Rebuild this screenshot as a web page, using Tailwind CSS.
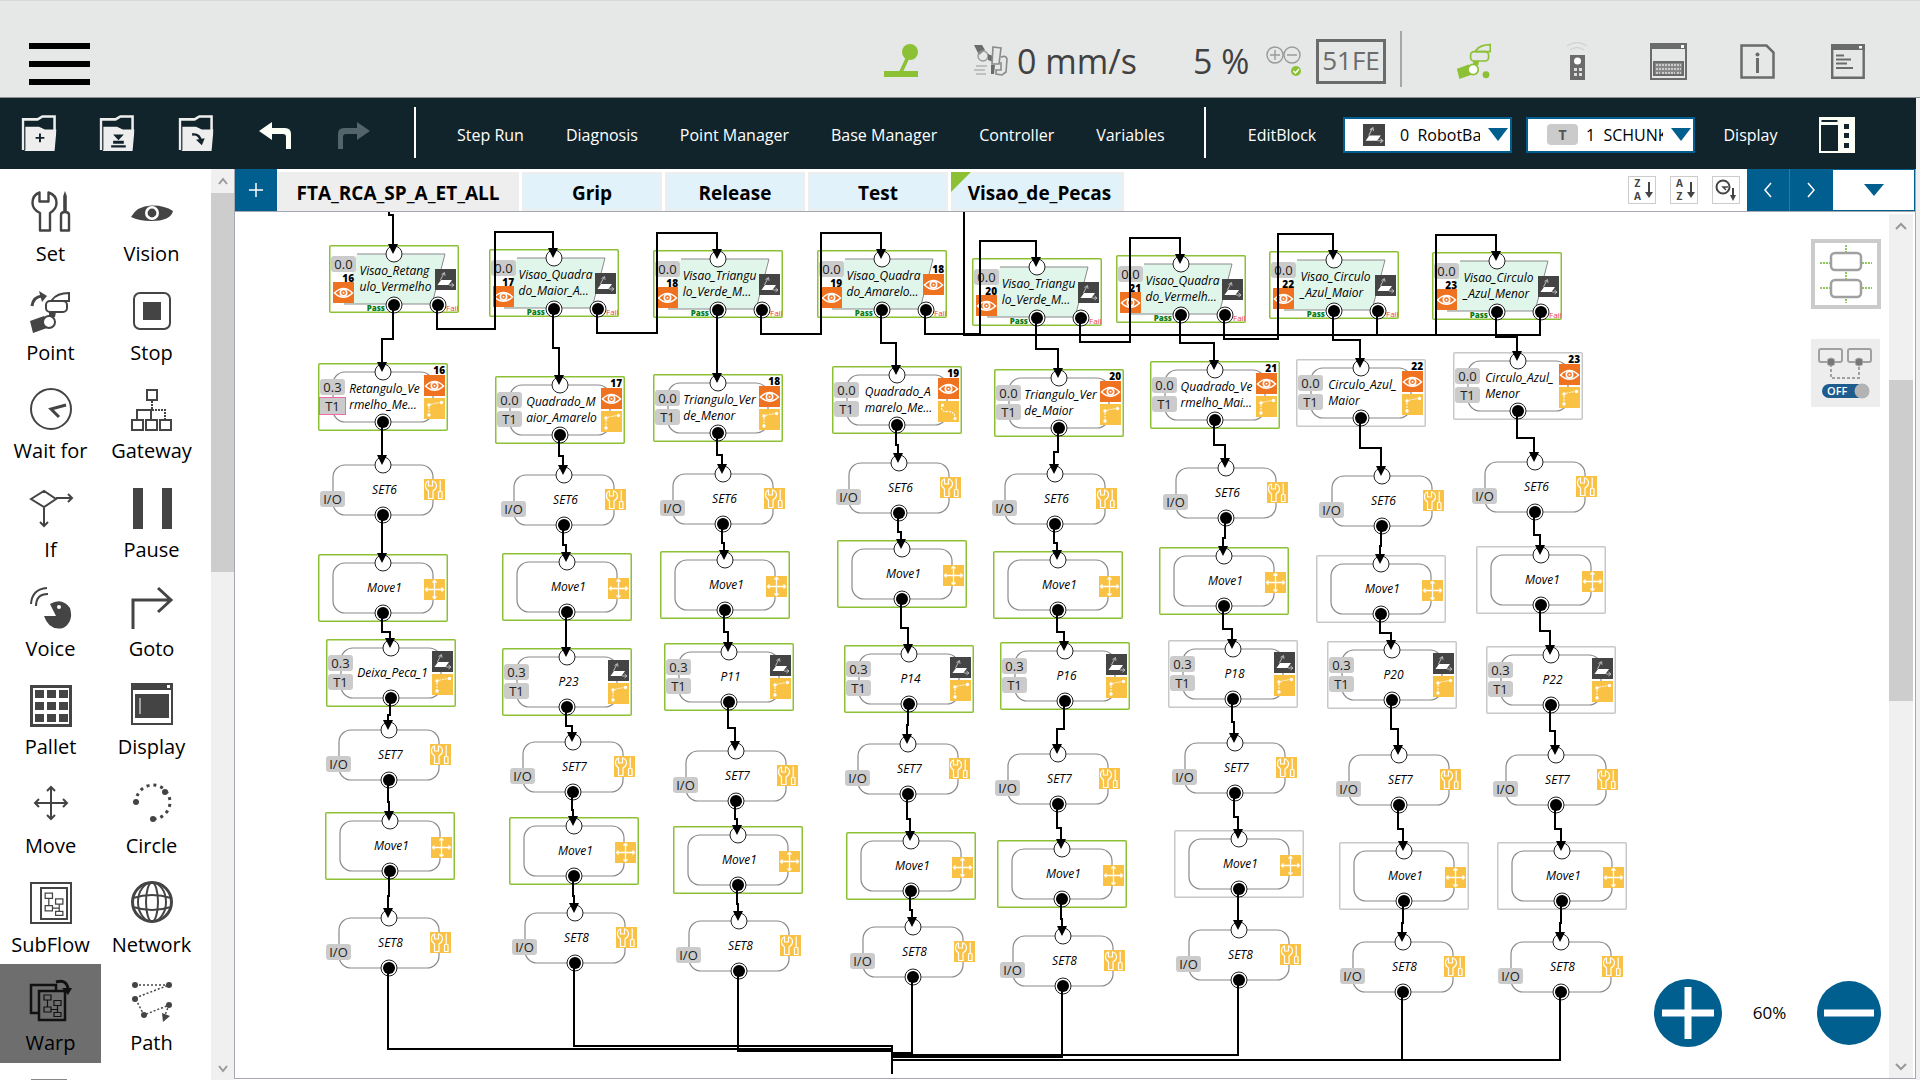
<!DOCTYPE html>
<html lang="en">
<head>
<meta charset="utf-8">
<title>Flow Editor</title>
<script src="https://cdn.jsdelivr.net/npm/@tailwindcss/browser@4"></script>
</head>
<body class="h-screen flex flex-col overflow-hidden bg-[#f0f0f0] font-['Open_Sans','Noto_Sans',sans-serif] text-black">

<!-- Shared icon symbols -->
<svg class="hidden" aria-hidden="true">
  <symbol id="tools" viewBox="0 0 40 42"><g fill="none" stroke="currentColor" stroke-width="2.4" stroke-linejoin="round"><path d="M8.5 2.5v9h9v-9q8 2.500 8 10.500q0 6-6.500 10v17.500h-10v-17.500q-7.500-3.500-7.500-10q0-8 7-10.500z"/><path d="M30 25q0-3 4-3t4 3v15.500h-8z"/></g><path d="M34 1l1.800 5v16h-3.600v-16z" fill="currentColor"/></symbol>
  <symbol id="eye-solid" viewBox="0 0 42 16"><path d="M0 12Q6 1 20 .500Q33 0 42 6Q40 16 20 16Q8 16 0 12z" fill="#444"/><circle cx="21" cy="8" r="5.700" fill="#444" stroke="#fff" stroke-width="2.600"/></symbol>
  <symbol id="arm" viewBox="0 0 40 42"><g fill="none" stroke="currentColor" stroke-width="2"><path d="M22 9q5-7 17-7v8h-17z"/><rect x="16" y="10" width="21" height="11" rx="4"/></g><path d="M19 21h7l-1 5h-6zM0 30l14-5l6 9l-3 3l-14 5z" fill="currentColor"/><circle cx="19" cy="31" r="6" fill="#fff" stroke="currentColor" stroke-width="2"/></symbol>
  <symbol id="flow" viewBox="0 0 20 24"><path d="M2 2h7v5h-7zM2 14h7v5h-7zM12 7.500h7v5h-7zM12 19.500h7v4h-7zM5.500 7v7M9 16.500h6.500M15.500 12.500v7" fill="none" stroke="currentColor" stroke-width="1.200"/></symbol>
  <symbol id="n-eye" viewBox="0 0 21 21"><rect width="21" height="21" fill="#ee7220"/><path d="M1.500 11Q10.500 2 19.500 11Q10.500 19.500 1.500 11z" fill="none" stroke="#fff" stroke-width="1.600"/><circle cx="10.500" cy="10.700" r="3.200" fill="none" stroke="#fff" stroke-width="1.600"/><circle cx="10.500" cy="10.700" r="1" fill="#fff"/></symbol>
  <symbol id="n-base" viewBox="0 0 21 21"><rect width="21" height="21" fill="#444"/><path d="M6 11h11l-3.500 5h-11z" fill="#fff"/><path d="M5.500 11L9 4M6.500 5.500L9.500 3.500l.5 3.300M14 16h5M16.500 14l2.500 2l-2.500 2" fill="none" stroke="#bbb" stroke-width="1"/></symbol>
  <symbol id="n-path" viewBox="0 0 21 21"><rect width="21" height="21" fill="#f9c245"/><path d="M5 17V7Q9 5.500 17 4.500" fill="none" stroke="#fff" stroke-width="1" stroke-dasharray="2 1"/><circle cx="5" cy="7" r="1.700" fill="#fff"/><circle cx="5" cy="17" r="1.700" fill="#fff"/><circle cx="17.500" cy="4.500" r="1.700" fill="#fff"/></symbol>
  <symbol id="n-curve" viewBox="0 0 21 21"><rect width="21" height="21" fill="#f9c245"/><path d="M4 4Q2 11 9 10.500Q17 10 17 17" fill="none" stroke="#fff" stroke-width="1.200" stroke-dasharray="2 1"/><circle cx="4.500" cy="4" r="1.600" fill="#fff"/><circle cx="17" cy="17.500" r="1.600" fill="#fff"/></symbol>
  <symbol id="n-set" viewBox="0 0 21 21"><rect width="21" height="21" fill="#f9c245"/><g fill="none" stroke="#fff" stroke-width="1.200"><path d="M4.500 2v5h4v-5q4 1 4 5q0 3-3.500 5v7.500h-4.500v-7.500q-3-2-3-5q0-4 3-5z"/><path d="M14.500 13q1.700-1.500 3.500 0v6.500h-3.500zM16.200 12V1.500"/></g></symbol>
  <symbol id="n-move" viewBox="0 0 21 21"><rect width="21" height="21" fill="#f9c245"/><path d="M10.500 2v17M2 10.500h17M8.500 3.500l2-2l2 2M8.500 17.500l2 2l2-2M3.500 8.500l-2 2l2 2M17.500 8.500l2 2l-2 2" fill="none" stroke="#fff" stroke-width="1.300"/></symbol>
  <symbol id="folder" viewBox="0 0 36 37"><path d="M1.500 36V4.500h15l5-3h12.500V18" fill="none" stroke="#eee" stroke-width="2.600"/><path d="M4 36V12h14l6 3h12l-2 22H3z" fill="#eee"/></symbol>
</svg>

<header class="h-[98px] shrink-0 bg-[#e6e7e7] border-t border-t-[#d9dada] border-b border-b-[#8c9293] flex items-center pt-1 pl-[29px] pr-[55px]">
  <button aria-label="Menu" class="w-[61px] mt-[26px] flex flex-col gap-3">
    <span class="block h-[6px] w-full bg-black"></span><span class="block h-[6px] w-full bg-black"></span><span class="block h-[6px] w-full bg-black"></span>
  </button>
  <div class="ml-auto flex items-center pt-5 text-[#414141]">
    <svg class="w-[34px] h-[34px]" viewBox="0 0 34 34" fill="#8dc135"><circle cx="26" cy="8" r="8"/><path d="M22 13l3 2l-6 13h-4zM0 27h34v6H0z"/></svg>
    <svg class="w-[35px] h-[32px] ml-[56px]" viewBox="0 0 35 32"><path d="M0 0h8l3 5l-6 5z" fill="#6b6b6b"/><circle cx="9" cy="11" r="5" fill="none" stroke="#999" stroke-width="1.400"/><path d="M14 9l5 2v6l-5-2z" fill="#6b6b6b"/><path d="M19 2l8 1l-2 16h-7zM27 12q5-2 6 2l-1 13l-4 3l-6-1v-4h5v-8" fill="none" stroke="#8a8a8a" stroke-width="1.600"/><path d="M2 21h11M0 25h11M2 29h10" stroke="#999" stroke-width="1.200"/><path d="M17 20h4l-1 9h-3z" fill="#6b6b6b"/></svg>
    <span class="ml-2 w-[176px] text-[34px] leading-9">0 mm/s</span>
    <span class="w-[73px] text-[34px] leading-9">5 %</span>
    <svg class="w-[35px] h-[30px]" viewBox="0 0 35 30" fill="none" stroke="#9a9a9a" stroke-width="1.400"><circle cx="9" cy="9" r="8"/><circle cx="26" cy="9" r="8"/><path d="M4 9h10M9 4v10M21 9h10"/><circle cx="30" cy="25" r="5" fill="#8dc135" stroke="none"/><path d="M27.500 25l2 2l3.500-4" stroke="#fff"/></svg>
    <span class="ml-[15px] w-[70px] h-[45px] border-[3px] border-[#6b6b6b] text-[#6b6b6b] text-[26px] leading-[36px] text-center">51FE</span>
    <span class="ml-[14px] w-[2px] h-14 -mt-1 bg-[#a5a7a7]"></span>
    <svg class="ml-[54px] w-9 h-9 text-[#8dc135]" viewBox="0 0 40 42"><use href="#arm"/><circle cx="34" cy="37" r="4" fill="currentColor"/></svg>
    <svg class="ml-[74px] w-[22px] h-[38px]" viewBox="0 0 22 38"><path d="M1 4q10-7 20 0M4 8q7-5 14 0" fill="none" stroke="#d3d5d5" stroke-width="1.500"/><path d="M4 13h15v25H4z" fill="#6b6b6b"/><circle cx="11.500" cy="19" r="3.500" fill="#fff"/><path d="M8 26h3v3H8zm5 0h3v3h-3zM8 31h3v3H8zm5 0h3v3h-3z" fill="#ddd"/></svg>
    <svg class="ml-[62px] w-[37px] h-[37px]" viewBox="0 0 37 37"><path d="M1 1h35v35H1z" fill="none" stroke="#6b6b6b" stroke-width="2"/><path d="M0 0h37v6H0z" fill="#6b6b6b"/><path d="M4 19h29v13H4z" fill="#888" stroke="#6b6b6b" stroke-width="2"/><path d="M31 2h3v3h-3z" fill="#fff"/><path d="M6 22h25M6 26h25M6 30h4M12 30h13M27 30h4" stroke="#ccc" stroke-width="2" stroke-dasharray="2 1"/></svg>
    <svg class="ml-[53px] w-[35px] h-[35px]" viewBox="0 0 35 35"><path d="M1.500 1.500h25l7 7v25h-32z" fill="none" stroke="#6b6b6b" stroke-width="2.500"/><circle cx="17.500" cy="10.500" r="2" fill="#6b6b6b"/><path d="M17.500 14v15" stroke="#6b6b6b" stroke-width="3"/></svg>
    <svg class="ml-14 w-[34px] h-[35px]" viewBox="0 0 34 35"><path d="M1.200 1h31.500v32.800H1.200z" fill="none" stroke="#6b6b6b" stroke-width="2.400"/><path d="M0 0h34v6H0z" fill="#6b6b6b"/><path d="M28 2h3v2.500h-3z" fill="#fff"/><path d="M5 11.500h8M5 15.500h15M5 19.500h11M5 24h17" stroke="#6b6b6b" stroke-width="2"/></svg>
  </div>
</header>

<nav class="h-[71px] shrink-0 mr-[4px] bg-[#12242b] text-white text-base flex items-center pl-[21px] pt-[2px] whitespace-nowrap">
  <button aria-label="New" class="w-9 h-9 -mt-1"><svg class="w-9 h-9" viewBox="0 0 36 37"><use href="#folder"/><path d="M19 19v9M14.500 23.500h9" stroke="#12242b" stroke-width="2"/></svg></button>
  <button aria-label="Save" class="ml-[42px] w-9 h-9 -mt-1"><svg class="w-9 h-9" viewBox="0 0 36 37"><use href="#folder"/><path d="M14 20h11l-5.500 6zM14 26.500h11v3H14zM12 31h15v2.500H12z" fill="#12242b"/></svg></button>
  <button aria-label="Open" class="ml-[43px] w-9 h-9 -mt-1"><svg class="w-9 h-9" viewBox="0 0 36 37"><use href="#folder"/><path d="M14 20q8-1 9 7" fill="none" stroke="#12242b" stroke-width="2.500"/><path d="M18 25.500l9-1.500l-3 7z" fill="#12242b"/></svg></button>
  <button aria-label="Undo" class="ml-[45px] w-8 h-8"><svg class="text-[#fcfff5]" viewBox="0 0 32 32"><path d="M0 12L13 3v6h13q6 0 6 6v15h-5V18q0-3-3-3H13v6z" fill="currentColor"/></svg></button>
  <button aria-label="Redo" class="ml-[47px] w-8 h-8"><svg class="text-[#54646b]" viewBox="0 0 32 32"><path d="M32 12L19 3v6H6q-6 0-6 6v15h5V18q0-3 3-3h11v6z" fill="currentColor"/></svg></button>
  <span class="ml-11 w-[2px] h-[51px] bg-white -mt-1"></span>
  <div class="ml-[41px] w-[747px] flex gap-[42px]">
    <button>Step Run</button><button>Diagnosis</button><button>Point Manager</button><button>Base Manager</button><button>Controller</button><button>Variables</button>
  </div>
  <span class="w-[2px] h-[51px] bg-white -mt-1"></span>
  <button class="ml-[41px] w-[70px]">EditBlock</button>
  <div class="relative ml-[26px]">
    <select aria-label="Base" class="appearance-none block w-[169px] h-9 bg-white border-2 border-[#005f8f] pl-[55px] pr-[30px] text-black text-base overflow-hidden"><option>0&nbsp; RobotBase</option></select>
    <svg class="absolute left-[20px] top-[7px] w-[22px] h-[22px]"><use href="#n-base"/></svg>
    <svg class="absolute right-1 top-[11px] w-5 h-[13px]" viewBox="0 0 20 13"><path d="M0 0h20L10 13z" fill="#005f8f"/></svg>
  </div>
  <div class="relative ml-[14px]">
    <select aria-label="Tool" class="appearance-none block w-[169px] h-9 bg-white border-2 border-[#005f8f] pl-[58px] pr-[30px] text-black text-base overflow-hidden"><option>1&nbsp; SCHUNK</option></select>
    <span class="absolute left-[21px] top-[7px] w-[31px] h-[21px] rounded bg-[#cbcbcb] text-[#555] text-sm leading-[21px] font-bold text-center">T</span>
    <svg class="absolute right-1 top-[11px] w-5 h-[13px]" viewBox="0 0 20 13"><path d="M0 0h20L10 13z" fill="#005f8f"/></svg>
  </div>
  <button class="ml-7 w-[55px]">Display</button>
  <button aria-label="Panel layout" class="ml-[41px]"><svg class="w-9 h-9" viewBox="0 0 36 36"><path d="M0 0h36v36H0z" fill="#fcfff5"/><path d="M2.500 4h16M3 9h15v24H3z" fill="#12242b" stroke="#12242b" stroke-width="2"/><path d="M25 7h5v5h-5zm0 9h5v5h-5zm0 10h5v5h-5z" fill="#12242b"/></svg></button>
</nav>

<main class="flex-1 min-h-0 mr-[4px] flex bg-white">
  <aside class="w-[211px] shrink-0 flex flex-col pt-[6px] pr-[9px]">
    <div id="palette" class="flex-1 min-h-0 grid grid-cols-2 grid-rows-9"></div>
    <div class="h-[17px] shrink-0 flex items-end pl-[31px]"><span class="w-9 h-px bg-[#888]"></span></div>
  </aside>
  <div class="w-[23px] shrink-0 bg-[#f0f0f0] flex flex-col items-center text-[#999]">
    <svg class="h-6 w-3 shrink-0" viewBox="0 0 12 24"><path d="M2 15l4-5l4 5" fill="none" stroke="currentColor" stroke-width="2"/></svg>
    <div class="w-full h-[379px] bg-[#cdcdcd]"></div>
    <svg class="h-6 w-3 shrink-0 mt-auto" viewBox="0 0 12 24"><path d="M2 10l4 5l4-5" fill="none" stroke="currentColor" stroke-width="2"/></svg>
  </div>

  <section class="flex-1 min-w-0 flex flex-col border-l border-r border-b border-[#a5a8b0] mb-px">
    <div class="h-[43px] shrink-0 flex items-end border-b border-[#a5a8b0] whitespace-nowrap">
      <button class="w-[42px] h-[42px] bg-[#005f8f] flex items-center justify-center" aria-label="Add tab"><svg class="w-[14px] h-[14px]" viewBox="0 0 14 14"><path d="M7 0v14M0 7h14" stroke="#fff" stroke-width="1.500"/></svg></button>
      <div class="flex gap-[3px] text-[19px] font-bold">
        <button class="w-[242px] h-[39px] bg-[#eee] pt-1">FTA_RCA_SP_A_ET_ALL</button>
        <button class="w-[140px] h-[39px] bg-[#e1f2fb] border-2 border-[#eee] pt-1">Grip</button>
        <button class="w-[140px] h-[39px] bg-[#e1f2fb] border-2 border-[#eee] pt-1">Release</button>
        <button class="w-[140px] h-[39px] bg-[#e1f2fb] border-2 border-[#eee] pt-1">Test</button>
        <button class="relative w-[173px] h-[39px] bg-[#e1f2fb] border-2 border-[#eee] pt-1 pl-1">Visao_de_Pecas<svg class="absolute -left-[2px] -top-[2px] w-5 h-5" viewBox="0 0 20 20"><path d="M0 0h20L0 20z" fill="#8dc135"/></svg></button>
      </div>
      <div class="ml-auto self-center flex gap-[14px] pr-[7px]">
        <button aria-label="Sort descending" class="w-7 h-7 border border-[#ccc] bg-white flex items-center gap-[3px] pl-1 text-[#444] text-[10px] font-bold"><span class="flex flex-col w-[9px] leading-[13px]"><span>Z</span><span>A</span></span><svg class="w-2 h-4" viewBox="0 0 8 16"><path d="M4 0v12" stroke="#444" stroke-width="2"/><path d="M0 10h8l-4 6z" fill="#444"/></svg></button>
        <button aria-label="Sort ascending" class="w-7 h-7 border border-[#ccc] bg-white flex items-center gap-[3px] pl-1 text-[#444] text-[10px] font-bold"><span class="flex flex-col w-[9px] leading-[13px]"><span>A</span><span>Z</span></span><svg class="w-2 h-4" viewBox="0 0 8 16"><path d="M4 0v12" stroke="#444" stroke-width="2"/><path d="M0 10h8l-4 6z" fill="#444"/></svg></button>
        <button aria-label="Sort by time" class="w-7 h-7 border border-[#ccc] bg-white"><svg viewBox="0 0 26 26"><circle cx="10" cy="10" r="6.500" fill="none" stroke="#444" stroke-width="2"/><path d="M15 10h-5l3 3" fill="none" stroke="#444" stroke-width="1.500"/><path d="M20 11v8" stroke="#444" stroke-width="2"/><path d="M17 18h6l-3 6z" fill="#444"/></svg></button>
      </div>
      <div class="flex h-[42px]">
        <button aria-label="Previous tabs" class="w-[43px] bg-[#005f8f] border-r border-[#2a7ba5] flex items-center justify-center"><svg class="w-3 h-4" viewBox="0 0 12 16"><path d="M9 1L3 8l6 7" fill="none" stroke="#fff" stroke-width="1.500"/></svg></button>
        <button aria-label="Next tabs" class="w-[42px] bg-[#005f8f] flex items-center justify-center"><svg class="w-3 h-4" viewBox="0 0 12 16"><path d="M3 1l6 7l-6 7" fill="none" stroke="#fff" stroke-width="1.500"/></svg></button>
        <button aria-label="Tab list" class="w-[83px] bg-white border border-[#005f8f] flex items-center justify-center"><svg class="w-5 h-3" viewBox="0 0 20 12"><path d="M0 0h20L10 12z" fill="#005f8f"/></svg></button>
      </div>
    </div>

    <div class="flex-1 min-h-0 flex">
      <div id="canvas" class="relative flex-1 min-w-0 overflow-hidden">
        <div id="nodes"></div>
        <svg id="edges" class="absolute inset-0 w-full h-full pointer-events-none" fill="none" stroke="#000" stroke-width="2"></svg>

        <div class="absolute right-2 top-[27px] flex flex-col gap-[30px]">
          <button aria-label="Align nodes" class="w-[70px] h-[70px] border-4 border-[#cbcbcb] bg-white"><svg viewBox="0 0 62 62"><path d="M31 2v58M5 20h52M5 45h52" stroke="#8dc95a" stroke-width="2" stroke-dasharray="2 1"/><rect x="16" y="10" width="30" height="17" rx="4" fill="#fff" stroke="#a0a0a0" stroke-width="2.500"/><rect x="16" y="37" width="30" height="17" rx="4" fill="#fff" stroke="#a0a0a0" stroke-width="2.500"/></svg></button>
          <button class="relative w-[69px] h-[68px] bg-[#ededed]" aria-label="Link mode off">
            <svg class="w-full h-full" viewBox="0 0 69 68" fill="none"><g stroke="#a0a0a0" stroke-width="2"><rect x="8" y="10" width="23" height="13" rx="2"/><rect x="37" y="10" width="23" height="13" rx="2"/><path d="M20 25v14h28V25" stroke-dasharray="3 2"/></g><circle cx="20" cy="23" r="4" fill="#777" stroke="#aaa"/><circle cx="48" cy="23" r="4" fill="#777" stroke="#aaa"/><rect x="11" y="45" width="47" height="14" rx="7" fill="#1d5c8c"/><circle cx="51" cy="52" r="7.500" fill="#b3b3b3"/></svg>
            <span class="absolute left-4 top-[45px] text-[11px] leading-[14px] font-semibold text-white">OFF</span>
          </button>
        </div>

        <div class="absolute right-2 bottom-[31px] flex items-center text-[17px]">
          <button aria-label="Zoom in"><svg class="w-[68px] h-[68px]" viewBox="0 0 68 68"><circle cx="34" cy="34" r="34" fill="#005f8f"/><path d="M34 8v52M8 34h52" stroke="#fff" stroke-width="7"/></svg></button>
          <output class="w-[95px] text-center">60%</output>
          <button aria-label="Zoom out"><svg class="w-16 h-16" viewBox="0 0 64 64"><circle cx="32" cy="32" r="32" fill="#005f8f"/><path d="M7 32h50" stroke="#fff" stroke-width="7"/></svg></button>
        </div>
      </div>
      <div class="w-6 mr-[2px] mt-[2px] shrink-0 bg-[#f0f0f0] flex flex-col items-center text-[#999]">
        <svg class="h-6 w-3 shrink-0" viewBox="0 0 12 24"><path d="M1 15l5-5l5 5" fill="none" stroke="currentColor" stroke-width="2"/></svg>
        <div class="mt-[142px] w-full h-[321px] bg-[#cdcdcd]"></div>
        <svg class="h-6 w-3 shrink-0 mt-auto" viewBox="0 0 12 24"><path d="M1 10l5 5l5-5" fill="none" stroke="currentColor" stroke-width="2"/></svg>
      </div>
    </div>
  </section>
</main>

<script>
// Palette: label and the icon's inner drawing on a 42x42 board
const S = 'fill="none" stroke="#444" stroke-width="2"';
const T = 'fill="none" stroke="#444" stroke-width="3"';
const palette = [
  ['Set', '<g color="#444"><use href="#tools" x="1" width="40" height="42"/></g>'],
  ['Vision', '<use href="#eye-solid" y="15" width="42" height="16"/>'],
  ['Point', `<g color="#444"><use href="#arm" x="0" y="2" width="40" height="42"/></g><path d="M2 17q1-9 10-10" ${T}/><path d="M9 2l8 5l-5 6z" fill="#444"/>`],
  ['Stop', `<rect x="3" y="4" width="36" height="36" rx="6" ${S}/><path d="M12 13h18v18H12z" fill="#444"/>`],
  ['Wait for', `<circle cx="21" cy="22" r="20" ${S}/><path d="M36 18l-15 4l8 8" ${T}/>`],
  ['Gateway', `<path d="M16 3h10v10H16zM1 33h11v10H1zM15 33h11v10H15zM29 33h11v10H29zM6 33V23h14v10" ${S}/><path d="M21 14v9h13v10" ${S} stroke-dasharray="2 1"/>`],
  ['If', `<path d="M1 13l13-8l12 8l-12 8zM26 12h16M38 8l4 4l-4 4M14 21v19M10 36l4 4l4-4" ${S}/>`],
  ['Pause', '<path d="M2 2h10v41H2zM31 2h10v41H31z" fill="#444"/>'],
  ['Voice', `<path d="M1 19Q2 4 17 3M6 21q0-12 12-12" ${S}/><path d="M20 19q12-7 20 4q4 14-7 20q-14 3-19-12h12z" fill="#444"/><circle cx="29" cy="22" r="2" fill="#fff"/>`],
  ['Goto', `<path d="M2 44V15h37M27 3l13 12L27 27" ${T}/>`],
  ['Pallet', `<g transform="translate(0 2)"><path d="M1.500 1.500h39v39h-39z" ${T}/><path d="M5 5h9v8H5zm12 0h9v8h-9zm12 0h9v8h-9zM5 17h9v8H5zm12 0h9v8h-9zm12 0h9v8h-9zM5 29h9v8H5zm12 0h9v8h-9zm12 0h9v8h-9z" fill="#444"/></g>`],
  ['Display', `<path d="M1 1h40v40H1z" ${S}/><path d="M0 0h42v7H0zM4 11h34v24H4z" fill="#444"/><path d="M36 2h3v3h-3z" fill="#fff"/><path d="M9 15v16" stroke="#fff"/>`],
  ['Move', `<path d="M21 5v32M5 21h32M17 9l4-4l4 4M17 33l4 4l4-4M9 17l-4 4l4 4M33 17l4 4l-4 4" ${S}/>`],
  ['Circle', `<path d="M5 21A17 17 0 1 1 22 37" ${T} stroke-dasharray="3 4"/><g fill="#444"><circle cx="5" cy="20" r="3"/><circle cx="34" cy="10" r="3"/><circle cx="22" cy="37" r="3"/></g>`],
  ['SubFlow', `<path d="M1 2h40v40H1zM11 7h26v31H11z" ${S}/><g color="#444"><use href="#flow" x="13" y="10" width="21" height="25"/></g>`],
  ['Network', `<circle cx="21" cy="21" r="19.500" ${T}/><ellipse cx="21" cy="21" rx="6" ry="19.500" ${S}/><ellipse cx="21" cy="21" rx="14" ry="19.500" ${S}/><path d="M2 17q19-6 38 0M2 26q19 6 38 0" ${S}/>`],
  ['Warp', `<path d="M9 34H1V6h25v6M9 12h26v29H9z" fill="none" stroke="#111" stroke-width="2.500"/><g color="#111"><use href="#flow" x="12" y="14" width="20" height="24"/></g><path d="M26 3q10-3 12 6" fill="none" stroke="#111" stroke-width="3"/><path d="M32 9h10l-4 7z" fill="#111"/>`],
  ['Path', `<path d="M4 6h34L4 19l9 17l25-10l-4 10" fill="none" stroke="#444" stroke-width="1.500" stroke-dasharray="2 2"/><g fill="#444"><circle cx="4" cy="6" r="3"/><circle cx="38" cy="6" r="3"/><circle cx="4" cy="20" r="3"/><circle cx="13" cy="36" r="3"/><circle cx="38" cy="26" r="3"/><path d="M31 34l8 3l-7 6z"/></g>`]
];
document.getElementById('palette').innerHTML = palette.map(([label, art]) =>
  `<button class="flex flex-col items-center pt-[15px] gap-1 text-xl leading-8 whitespace-nowrap ${label === 'Warp' ? 'bg-[#6e6e6e]' : ''}"><svg class="w-[42px] h-[44px] shrink-0 overflow-visible" viewBox="0 0 42 44">${art}</svg>${label}</button>`).join('');

// Diagram. World coordinates are those of each node's upper connector; OX, OY is the scroll offset.
const OX = 235, OY = 212;
const columns = [
  [[394,254,'V','Visao_Retang<br>ulo_Vermelho',16],[383,372,'P','Retangulo_Ve<br>rmelho_Me...',16,'g','0.3'],[383,465,'S','SET6'],[383,563,'M','Move1',0,'g'],[391,648,'B','Deixa_Peca_1',0,'g'],[389,730,'S','SET7'],[390,821,'M','Move1',0,'g'],[389,918,'S','SET8']],
  [[554,258,'V','Visao_Quadra<br>do_Maior_A...',17],[560,385,'P','Quadrado_M<br>aior_Amarelo',17,'g','0.0'],[564,475,'S','SET6'],[567,562,'M','Move1',0,'g'],[567,657,'B','P23',0,'g'],[573,742,'S','SET7'],[574,826,'M','Move1',0,'g'],[575,913,'S','SET8']],
  [[718,259,'V','Visao_Triangu<br>lo_Verde_M...',18],[718,383,'P','Triangulo_Ver<br>de_Menor',18,'g','0.0'],[723,474,'S','SET6'],[725,560,'M','Move1',0,'g'],[729,652,'B','P11',0,'g'],[736,751,'S','SET7'],[738,835,'M','Move1',0,'g'],[739,921,'S','SET8']],
  [[882,259,'V','Visao_Quadra<br>do_Amarelo...',19,'g',18],[897,375,'P','Quadrado_A<br>marelo_Me...',19,'g','0.0','curve'],[899,463,'S','SET6'],[902,549,'M','Move1',0,'g'],[909,654,'B','P14',0,'g'],[908,744,'S','SET7'],[911,841,'M','Move1',0,'g'],[913,927,'S','SET8']],
  [[1037,267,'V','Visao_Triangu<br>lo_Verde_M...',20],[1059,378,'P','Triangulo_Ver<br>de_Maior',20,'g','0.0'],[1055,474,'S','SET6'],[1058,560,'M','Move1',0,'g'],[1065,651,'B','P16',0,'g'],[1058,754,'S','SET7'],[1062,849,'M','Move1',0,'g'],[1063,936,'S','SET8']],
  [[1181,264,'V','Visao_Quadra<br>do_Vermelh...',21],[1215,370,'P','Quadrado_Ve<br>rmelho_Mai...',21,'g','0.0'],[1226,468,'S','SET6'],[1224,556,'M','Move1',0,'g'],[1233,649,'B','P18',0,'x'],[1235,743,'S','SET7'],[1239,839,'M','Move1',0,'x'],[1239,930,'S','SET8']],
  [[1334,260,'V','Visao_Circulo<br>_Azul_Maior',22],[1361,368,'P','Circulo_Azul_<br>Maior',22,'x','0.0'],[1382,476,'S','SET6'],[1381,564,'M','Move1',0,'x'],[1392,650,'B','P20',0,'x'],[1399,755,'S','SET7'],[1404,851,'M','Move1',0,'x'],[1403,942,'S','SET8']],
  [[1497,261,'V','Visao_Circulo<br>_Azul_Menor',23],[1518,361,'P','Circulo_Azul_<br>Menor',23,'x','0.0'],[1535,462,'S','SET6'],[1541,555,'M','Move1',0,'x'],[1551,655,'B','P22',0,'x'],[1556,755,'S','SET7'],[1562,851,'M','Move1',0,'x'],[1561,942,'S','SET8']]
];

const tag = (t, pos, extra = 'rounded-[3px]') => `<span class="absolute ${pos} w-[25px] h-[16px] bg-[#cbcbcb] text-[#222] text-[13px] leading-[16px] text-center ${extra}">${t}</span>`;
const icon = (id, pos) => `<svg class="absolute ${pos} w-[21px] h-[21px]"><use href="#n-${id}"/></svg>`;
const num = (n, pos) => `<span class="absolute ${pos} text-[10px] leading-[10px] font-extrabold">${n}</span>`;
const ring = (x, y) => `<circle cx="${x}" cy="${y}" r="8" fill="#fff" stroke="#222" stroke-width="1"/>`;
const dot = (x, y) => ring(x, y) + `<circle cx="${x}" cy="${y}" r="6" fill="#000"/>`;

function node([x, y, kind, text, n, border, v, variant]) {
  let shape, extras = '';
  if (kind === 'V') {
    border = 'g';
    shape = `<path d="M28 9H116L103 59H15z" fill="#e0f6ea"/><path d="M28 9H116L103 59H15" fill="none" stroke="#8a8a8a"/>` + ring(65, 9) + dot(65, 60) + dot(109, 60);
    extras = tag('0.0', 'left-[2px] top-[11px]') + num(n, 'right-[105px] top-[28px]') + icon('eye', 'left-[4px] top-[37px]')
      + (v ? num(v, 'right-[3px] top-[14px]') + icon('eye', 'left-[106px] top-[24px]') : icon('base', 'left-[106px] top-[24px]'))
      + '<span class="absolute right-[74px] top-[59px] text-[8px] leading-[8px] font-extrabold text-[#0a7d1c]">Pass</span><span class="absolute left-[117px] top-[59px] text-[8px] leading-[8px] text-[#f0403a]">Fail</span>';
  } else {
    shape = `<rect x="15" y="9" width="100" height="50" rx="12" fill="#fff" stroke="#8a8a8a" stroke-width="1.200"/>` + ring(65, 9) + dot(65, 59);
    if (kind === 'P') extras = tag(v, 'left-[2px] top-[16px]') + tag('T1', 'left-[2px] top-[35px]', v === '0.3' ? 'outline outline-[#f06aa8]' : 'rounded-[3px]') + num(n, 'right-[3px] top-[2px]') + icon('eye', 'left-[106px] top-[12px]') + icon(variant || 'path', 'left-[106px] top-[35px]');
    if (kind === 'B') extras = tag('0.3', 'left-[2px] top-[16px]') + tag('T1', 'left-[2px] top-[35px]') + icon('base', 'left-[106px] top-[12px]') + icon('path', 'left-[106px] top-[35px]');
    if (kind === 'S') extras = tag('I/O', 'left-[2px] top-[35px]') + icon('set', 'left-[106px] top-[23px]');
    if (kind === 'M') extras = icon('move', 'left-[106px] top-[25px]');
  }
  const frame = border === 'g' ? '<rect x=".75" y=".75" width="128.500" height="66.500" rx="1" fill="#fff" stroke="#8dc135" stroke-width="1.500"/>' : border === 'x' ? '<rect x=".75" y=".75" width="128.500" height="66.500" rx="1" fill="#fff" stroke="#c8c8c8" stroke-width="1.500"/>' : '';
  return `<div class="absolute w-[130px] h-[68px] flex items-center justify-center pl-[3px]" style="left:${x - 65 - OX}px;top:${y - 9 - OY}px"><svg class="absolute inset-0 w-full h-full overflow-visible">${frame}${shape}</svg><span class="relative text-xs leading-4 italic whitespace-nowrap">${text}</span>${extras}</div>`;
}
document.getElementById('nodes').innerHTML = columns.flat().map(node).join('');

let d = '', heads = '';
const line = (...p) => { d += 'M' + p.map(([x, y]) => `${x - OX} ${y - OY}`).join('L'); };
const head = (x, y) => { heads += `M${x - OX - 5} ${y - OY - 10}h10l-5 10z`; };
columns.forEach((col, c) => {
  for (let i = 0; i < 7; i++) {
    const [x1, y1] = col[i], [x2, y2] = col[i + 1], a = y1 + 52, m = Math.round((a + y2) / 2);
    line([x1 - 1, a], [x1 - 1, m], [x2 - 1, m], [x2 - 1, y2 - 5]); head(x2 - 1, y2);
  }
});
// Fail outputs chain to the next vision node
[495, 657, 821, 980, 1130, 1278, 1436].forEach((rise, i) => {
  const [x1, y1] = columns[i][0], [x2, y2] = columns[i + 1][0];
  line([x1 + 43, y1 + 52], [x1 + 43, y1 + 75], [rise, y1 + 75], [rise, y2 - 26], [x2 - 1, y2 - 26], [x2 - 1, y2 - 5]); head(x2 - 1, y2);
});
line([1540, 313], [1540, 335], [964, 335], [964, 200]);
line([389, 200], [389, 215], [393, 215], [393, 250]); head(393, 254);
// Column ends gather on the shared trunk
[1049, 1046, 1051, 1053, 1057, 1055, 1060, 1060].forEach((y, c) => {
  const [x, top] = columns[c][7];
  line([x - 1, top + 51], [x - 1, y], [892, y]);
});
line([892, 1045], [892, 1074]);
document.getElementById('edges').innerHTML = `<path d="${d}"/><path d="${heads}" fill="#000" stroke="none"/>`;
</script>
</body>
</html>
